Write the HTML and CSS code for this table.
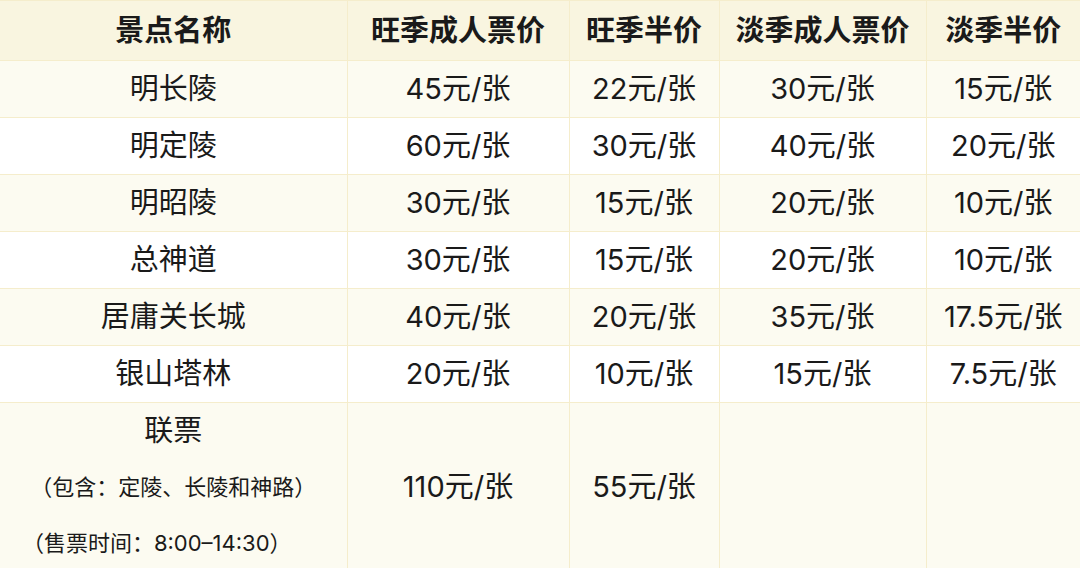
FILE: index.html
```html
<!DOCTYPE html>
<html lang="zh-CN">
<head>
<meta charset="utf-8">
<title>门票价格</title>
<link rel="stylesheet" href="styles.css">
</head>
<body>
<table class="prices">
  <colgroup>
    <col class="c1"><col class="c2"><col class="c3"><col class="c4"><col class="c5">
  </colgroup>
  <thead>
    <tr class="head">
      <th>景点名称</th><th>旺季成人票价</th><th>旺季半价</th><th>淡季成人票价</th><th>淡季半价</th>
    </tr>
  </thead>
  <tbody>
    <tr class="odd"><td>明长陵</td><td>45元/张</td><td>22元/张</td><td>30元/张</td><td>15元/张</td></tr>
    <tr class="even"><td>明定陵</td><td>60元/张</td><td>30元/张</td><td>40元/张</td><td>20元/张</td></tr>
    <tr class="odd"><td>明昭陵</td><td>30元/张</td><td>15元/张</td><td>20元/张</td><td>10元/张</td></tr>
    <tr class="even"><td>总神道</td><td>30元/张</td><td>15元/张</td><td>20元/张</td><td>10元/张</td></tr>
    <tr class="odd"><td>居庸关长城</td><td>40元/张</td><td>20元/张</td><td>35元/张</td><td>17.5元/张</td></tr>
    <tr class="even"><td>银山塔林</td><td>20元/张</td><td>10元/张</td><td>15元/张</td><td>7.5元/张</td></tr>
    <tr class="odd combo">
      <td>
        <div class="combo-title">联票</div>
        <div class="combo-note">（包含：定陵、长陵和神路）</div>
        <div class="combo-note time">（售票时间：8:00–14:30）</div>
      </td>
      <td>110元/张</td><td>55元/张</td><td></td><td></td>
    </tr>
  </tbody>
</table>
</body>
</html>
```

FILE: styles.css
```css
html, body {
  margin: 0;
  padding: 0;
  background: #ffffff;
}
body {
  font-family: "Inter", "Noto Sans CJK SC", "Noto Sans", sans-serif;
  color: #1a1a1a;
  overflow: hidden;
}
.prices {
  width: 1080px;
  border-collapse: collapse;
  table-layout: fixed;
  border-top: 1px solid #ece8dc;
}
.c1 { width: 347px; }
.c2 { width: 222px; }
.c3 { width: 150px; }
.c4 { width: 207px; }
.c5 { width: 154px; }

.prices th,
.prices td {
  border: 1px solid #f5edcc;
  text-align: center;
  vertical-align: middle;
  padding: 0;
  font-size: 29px;
  line-height: 36px;
  white-space: nowrap;
}
.prices th {
  font-weight: 700;
  height: 59px;
}
.prices tr.head { background: #f9f5e0; }
.prices tr.odd { background: #fcfbf1; }
.prices tr.even { background: #ffffff; }
.prices tbody td { height: 56px; }

.prices tr.combo td { height: auto; }
.combo-title {
  height: 56px;
  line-height: 56px;
  font-size: 29px;
}
.combo-note {
  height: 56px;
  line-height: 56px;
  font-size: 22px;
}
.combo-note.time {
  padding-right: 33px;
}
.prices th:first-child,
.prices td:first-child { border-left: none; }
.prices th:last-child,
.prices td:last-child { border-right: none; }
```
